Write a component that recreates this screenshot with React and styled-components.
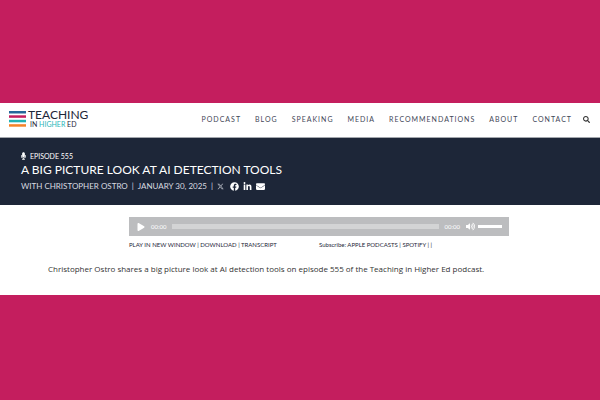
import React, { useState } from 'react';
import styled, { createGlobalStyle } from 'styled-components';
import {
  FaEnvelope,
  FaFacebook,
  FaLinkedinIn,
  FaMicrophone,
  FaPlay,
  FaSearch,
  FaVolumeUp,
} from 'react-icons/fa';
import { FaXTwitter } from 'react-icons/fa6';

const GlobalStyle = createGlobalStyle`
  * {
    box-sizing: border-box;
  }

  body {
    margin: 0;
    background: #c41e5e;
    font-family: Lato, "Liberation Sans", sans-serif;
  }

  a {
    color: inherit;
    text-decoration: none;
  }
`;

const Page = styled.div`
  display: flex;
  flex-direction: column;
  justify-content: center;
  min-height: 100vh;
  padding-bottom: 2px;
`;

const Header = styled.header`
  display: flex;
  align-items: center;
  justify-content: space-between;
  padding: 0 9px 2px;
  height: 35px;
  background: #fff;
  border-bottom: 1px solid #a3a7ad;
`;

const Logo = styled.a`
  display: flex;
  align-items: center;
  gap: 2px;
  color: #1d2638;
`;

const LogoText = styled.span`
  display: flex;
  flex-direction: column;
  font-size: 12px;
  line-height: 10px;
`;

const LogoSub = styled.span`
  padding-left: 2px;
  font-size: 7px;
  line-height: 8px;

  em {
    color: #27b5b8;
    font-style: normal;
  }
`;

const Nav = styled.nav`
  display: flex;
  align-items: center;
  gap: 14px;
  color: #3f4757;
  font-size: 7px;
  letter-spacing: 1px;
`;

const IconButton = styled.button`
  display: flex;
  padding: 0;
  border: 0;
  background: none;
  color: ${(props) => props.$color || '#fff'};
  font-size: ${(props) => props.$size || 7}px;
`;

const SearchButton = styled(IconButton)`
  margin: 0 1px 0 -3px;
`;

const Hero = styled.section`
  padding: 13px 21px 12px;
  background: #1d2638;
  color: #fff;
`;

const Episode = styled.div`
  display: flex;
  align-items: center;
  gap: 4px;
  font-size: 7px;
  line-height: 10px;

  svg {
    width: 5px;
    height: 8px;
  }
`;

const Title = styled.h1`
  margin: 0;
  font-size: 12px;
  font-weight: 400;
  line-height: 18px;
`;

const Meta = styled.div`
  display: flex;
  align-items: center;
  gap: 4px;
  color: #d9dbe0;
  font-size: 8px;
  line-height: 14px;
`;

const Share = styled.div`
  display: flex;
  align-items: center;
  gap: 4px;
  color: #fff;
  font-size: 9px;

  a {
    display: flex;
  }

  a:first-child {
    margin-right: 2px;
    color: #b9bdc6;
    font-size: 7px;
  }
`;

const Content = styled.main`
  padding: 12px 48px 18px;
  background: #fff;
  color: #333;
`;

const PlayerWrap = styled.div`
  max-width: 380px;
  margin: 0 43px 0 auto;
`;

const Player = styled.div`
  display: flex;
  align-items: center;
  gap: 6px;
  height: 19px;
  padding: 0 7px 0 8px;
  background: #bcbdbf;
  color: #fff;
  font-size: 6px;
`;

const Slider = styled.input`
  flex: ${(props) => (props.$width ? `0 0 ${props.$width}px` : '1')};
  min-width: 0;
  height: ${(props) => props.$height}px;
  margin: 0;
  appearance: none;
  background: ${(props) => props.$track};

  &::-webkit-slider-thumb {
    appearance: none;
    width: 1px;
    height: 1px;
  }
`;

const Volume = styled.div`
  display: flex;
  align-items: center;
  gap: 3px;
`;

const Links = styled.div`
  display: grid;
  grid-template-columns: 1fr 1fr;
  margin-top: 5px;
  color: #1d2638;
  font-size: 6px;
  line-height: 8px;
`;

const Summary = styled.p`
  margin: 13px 0 1px;
  font-family: "Open Sans", sans-serif;
  font-size: 8px;
  line-height: 14px;
`;

const pages = ['Podcast', 'Blog', 'Speaking', 'Media', 'Recommendations', 'About', 'Contact'];

const App = () => {
  const [position, setPosition] = useState(0);
  const [volume, setVolume] = useState(80);

  return (
    <>
      <GlobalStyle />
      <Page>
        <Header>
          <Logo href="#">
            <svg width="17" height="16" viewBox="0 0 17 16" aria-hidden="true">
              <rect width="17" height="2.5" fill="#25679a" />
              <rect y="4.3" width="17" height="2.5" fill="#c41e5e" />
              <rect y="8.8" width="17" height="2.5" fill="#20b2b5" />
              <rect y="13.2" width="17" height="2.5" fill="#f58229" />
            </svg>
            <LogoText>
              TEACHING
              <LogoSub>IN <em>HIGHER</em> ED</LogoSub>
            </LogoText>
          </Logo>
          <Nav>
            {pages.map((page) => (
              <a key={page} href={`#${page.toLowerCase()}`}>{page.toUpperCase()}</a>
            ))}
            <SearchButton $color="#333" aria-label="Search"><FaSearch /></SearchButton>
          </Nav>
        </Header>
        <Hero>
          <Episode><FaMicrophone /> EPISODE 555</Episode>
          <Title>A BIG PICTURE LOOK AT AI DETECTION TOOLS</Title>
          <Meta>
            <span>WITH CHRISTOPHER OSTRO</span>
            <span>|</span>
            <span>JANUARY 30, 2025</span>
            <span>|</span>
            <Share>
              <a href="#x" aria-label="X"><FaXTwitter /></a>
              <a href="#facebook" aria-label="Facebook"><FaFacebook /></a>
              <a href="#linkedin" aria-label="LinkedIn"><FaLinkedinIn /></a>
              <a href="#email" aria-label="Email"><FaEnvelope /></a>
            </Share>
          </Meta>
        </Hero>
        <Content>
          <PlayerWrap>
            <Player>
              <IconButton $size={8} aria-label="Play"><FaPlay /></IconButton>
              <span>00:00</span>
              <Slider
                type="range"
                aria-label="Position"
                $height={5}
                $track="#d3d4d5"
                value={position}
                onChange={(e) => setPosition(e.target.value)}
              />
              <span>00:00</span>
              <Volume>
                <IconButton $size={9} aria-label="Mute"><FaVolumeUp /></IconButton>
                <Slider
                  type="range"
                  aria-label="Volume"
                  $width={24}
                  $height={3}
                  $track="#fff"
                  value={volume}
                  onChange={(e) => setVolume(e.target.value)}
                />
              </Volume>
            </Player>
            <Links>
              <span>
                <a href="#play">PLAY IN NEW WINDOW</a> | <a href="#download">DOWNLOAD</a> | <a href="#transcript">TRANSCRIPT</a>
              </span>
              <span>
                Subscribe: <a href="#apple">APPLE PODCASTS</a> | <a href="#spotify">SPOTIFY</a> | |
              </span>
            </Links>
          </PlayerWrap>
          <Summary>
            Christopher Ostro shares a big picture look at AI detection tools on episode 555 of the Teaching in Higher Ed podcast.
          </Summary>
        </Content>
      </Page>
    </>
  );
};

export default App;
